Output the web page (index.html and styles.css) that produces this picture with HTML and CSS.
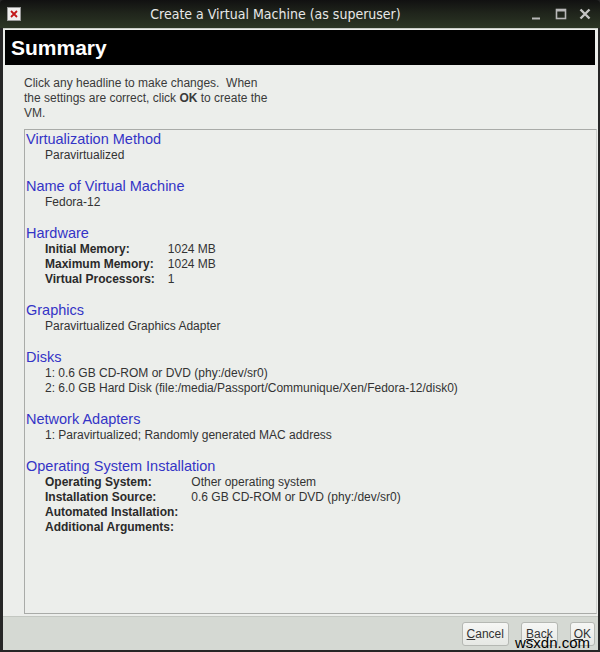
FILE: index.html
```html
<!DOCTYPE html>
<html lang="en">
<head>
    <meta charset="UTF-8">
    <title>Create a Virtual Machine (as superuser)</title>
    <link rel="stylesheet" href="styles.css">
</head>
<body>
    <div class="window">
        <div class="titlebar">
            <div class="close-box">
                <svg width="8" height="8" viewBox="0 0 8 8"><path d="M1 1L7 7M7 1L1 7" stroke="#c21818" stroke-width="1.8"/></svg>
            </div>
            <div class="title">Create a Virtual Machine (as superuser)</div>
            <div class="wm-buttons">
                <svg width="14" height="14" viewBox="0 0 14 14"><path d="M2 11.5H10" stroke="#b8b8b8" stroke-width="2"/></svg>
                <svg width="14" height="14" viewBox="0 0 14 14"><rect x="2.5" y="2.5" width="9" height="9" fill="none" stroke="#b8b8b8" stroke-width="1.6"/><path d="M2.5 3.5H11.5" stroke="#b8b8b8" stroke-width="2"/></svg>
                <svg width="14" height="14" viewBox="0 0 14 14"><path d="M2.5 2.5L11.5 11.5M11.5 2.5L2.5 11.5" stroke="#c4c4c4" stroke-width="2.4"/></svg>
            </div>
        </div>

        <div class="frame">
            <div class="banner">Summary</div>

            <div class="page">
                <p class="intro">Click any headline to make changes.&nbsp; When<br>the settings are correct, click <b>OK</b> to create the<br>VM.</p>

                <div class="summary">
                    <div class="section">
                        <div class="headline">Virtualization Method</div>
                        <div class="item">Paravirtualized</div>
                    </div>
                    <div class="section">
                        <div class="headline">Name of Virtual Machine</div>
                        <div class="item">Fedora-12</div>
                    </div>
                    <div class="section">
                        <div class="headline">Hardware</div>
                        <div class="pairs">
                            <span class="key">Initial Memory:</span><span>1024 MB</span>
                            <span class="key">Maximum Memory:</span><span>1024 MB</span>
                            <span class="key">Virtual Processors:</span><span>1</span>
                        </div>
                    </div>
                    <div class="section">
                        <div class="headline">Graphics</div>
                        <div class="item">Paravirtualized Graphics Adapter</div>
                    </div>
                    <div class="section">
                        <div class="headline">Disks</div>
                        <div class="item">1: 0.6 GB CD-ROM or DVD (phy:/dev/sr0)</div>
                        <div class="item">2: 6.0 GB Hard Disk (file:/media/Passport/Communique/Xen/Fedora-12/disk0)</div>
                    </div>
                    <div class="section">
                        <div class="headline">Network Adapters</div>
                        <div class="item">1: Paravirtualized; Randomly generated MAC address</div>
                    </div>
                    <div class="section">
                        <div class="headline">Operating System Installation</div>
                        <div class="pairs">
                            <span class="key">Operating System:</span><span>Other operating system</span>
                            <span class="key">Installation Source:</span><span>0.6 GB CD-ROM or DVD (phy:/dev/sr0)</span>
                            <span class="key">Automated Installation:</span><span></span>
                            <span class="key">Additional Arguments:</span><span></span>
                        </div>
                    </div>
                </div>
            </div>

            <div class="actions">
                <button class="btn"><u>C</u>ancel</button>
                <button class="btn"><u>B</u>ack</button>
                <button class="btn btn-ok"><u>O</u>K</button>
            </div>
        </div>

        <div class="watermark">wsxdn.com</div>
    </div>
</body>
</html>
```

FILE: styles.css
```css
* {
    margin: 0;
    padding: 0;
    box-sizing: border-box;
}

body {
    background: #1c1c1c;
    font-family: 'Liberation Sans', Arial, sans-serif;
    font-size: 12px;
    color: #333;
}

.window {
    position: relative;
    width: 600px;
    height: 652px;
    display: flex;
    flex-direction: column;
    background: #262626;
    overflow: hidden;
}

/* window manager title bar */
.titlebar {
    height: 28px;
    display: flex;
    align-items: center;
    padding: 0 8px 0 7px;
    background: linear-gradient(180deg, #111 0%, #1f241b 45%, #2c3625 100%);
    border-radius: 4px 4px 0 0;
}

.close-box {
    width: 14px;
    height: 14px;
    background: #f0f0ee;
    border: 1px solid #9a9a9a;
    display: flex;
    align-items: center;
    justify-content: center;
}

.title {
    flex: 1;
    text-align: center;
    font-family: 'DejaVu Sans Condensed', 'DejaVu Sans', sans-serif;
    font-size: 14px;
    color: #e8e8e8;
}

.wm-buttons {
    display: flex;
    gap: 10px;
}

.frame {
    flex: 1;
    display: flex;
    flex-direction: column;
    margin: 0 2px 2px 3px;
    background: #eceeeb;
    border-top: 1px solid #c9cdc7;
}

.banner {
    margin: 1px 3px 0 2px;
    height: 35px;
    background: #000;
    color: #fff;
    font-size: 21px;
    font-weight: bold;
    padding: 6px 0 0 6px;
}

.page {
    flex: 1;
    display: flex;
    flex-direction: column;
    padding: 11px 1px 0 21px;
}

.intro {
    line-height: 15px;
    color: #3a3a3a;
    margin-bottom: 8px;
}

.summary {
    flex: 1;
    border: 1px solid #a9aba8;
    border-right-color: #d0d2cf;
    padding: 1px 0 0 1px;
}

.section {
    margin-bottom: 15px;
}

.headline {
    font-size: 14.5px;
    line-height: 17px;
    color: #3434c6;
}

.item {
    padding-left: 19px;
    line-height: 15px;
}

.pairs {
    display: grid;
    grid-template-columns: auto 1fr;
    column-gap: 13px;
    padding-left: 19px;
    line-height: 15px;
}

.key {
    font-weight: bold;
    color: #2a2a2a;
}

.actions {
    height: 34px;
    margin-top: 2px;
    border-top: 1px solid #c3c7c1;
    background: #d5d9d3;
    display: flex;
    justify-content: flex-end;
    align-items: center;
    gap: 12px;
    padding: 0 3px 0 0;
}

.btn {
    height: 24px;
    padding: 0 4px;
    font-family: 'Liberation Sans', Arial, sans-serif;
    font-size: 12px;
    color: #333;
    background: linear-gradient(180deg, #f6f7f5, #e6e8e4);
    border: 1px solid #b5b8b3;
    border-radius: 3px;
}

.btn-ok {
    padding: 0 3px;
}

.watermark {
    position: absolute;
    right: 10px;
    bottom: 1px;
    font-size: 15px;
    color: #000;
}
```
